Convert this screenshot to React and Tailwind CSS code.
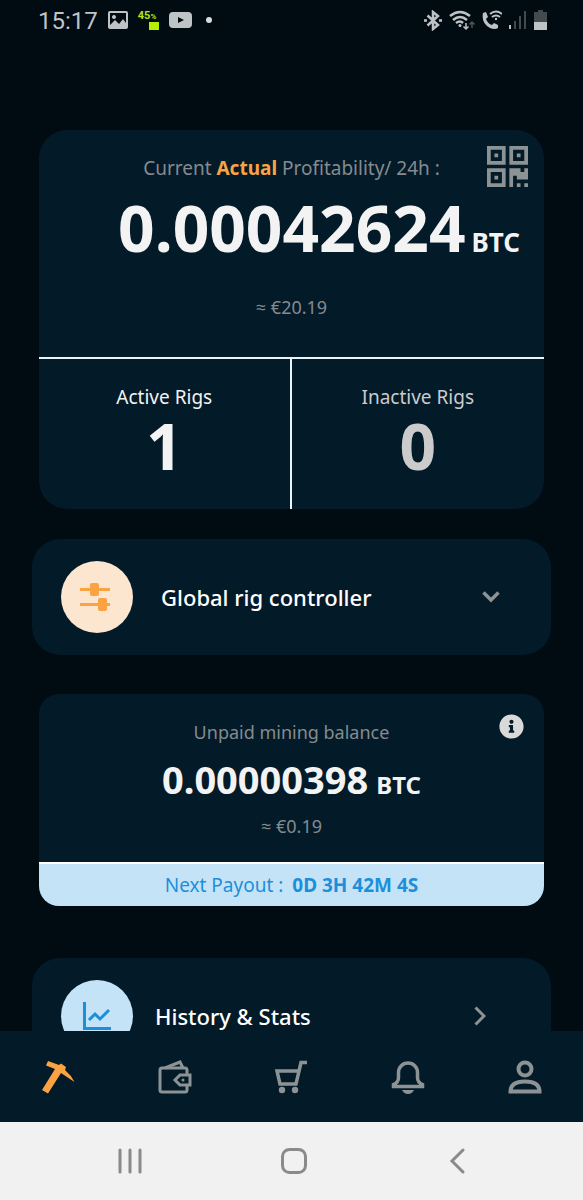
import { useState } from "react";
import { FaInfoCircle } from "react-icons/fa";

function StatusBar() {
  return (
    <header className="flex h-10 shrink-0 items-center justify-between pl-[38px] pr-9 text-[#bfc3c6]">
      <div className="flex items-center gap-2.5">
        <span className="pt-0.5 font-['Roboto',sans-serif] text-2xl leading-7">15:17</span>
        <svg width="20" height="18" viewBox="0 0 20 18">
          <path fill="currentColor" fillRule="evenodd" d="M2 0h16a2 2 0 0 1 2 2v14a2 2 0 0 1-2 2H2a2 2 0 0 1-2-2V2a2 2 0 0 1 2-2zM2 2v12l5-5 4 4 4-5 3 4V2zM6 4a2 2 0 1 0 .01 0z" />
        </svg>
        <div className="flex w-[21px] flex-col font-['Roboto',sans-serif] text-[#b4e61e]">
          <span className="text-[11px] font-bold leading-[10px]">45<span className="text-[8px]">%</span></span>
          <span className="h-2 w-2.5 self-end bg-[#b4f000]" />
        </div>
        <svg width="23" height="16" viewBox="0 0 23 16">
          <path fill="currentColor" fillRule="evenodd" d="M4 0h15q4 0 4 4v8q0 4-4 4H4q-4 0-4-4V4q0-4 4-4zm5 5v6l6-3z" />
        </svg>
        <span className="ml-1 h-1.5 w-1.5 rounded-full bg-[#d9dcde]" />
      </div>
      <div className="flex items-center gap-[7px]">
        <svg width="18" height="21" viewBox="0 0 18 21" fill="none" stroke="currentColor" strokeWidth="2.500">
          <path d="M3.500 5.500L14 15 9 19V2l5 4L3.500 15.500" />
          <path d="M0 10.500h3M15 10.500h3" />
        </svg>
        <svg width="26" height="21" viewBox="0 0 26 21" fill="none" stroke="currentColor" strokeWidth="2.500">
          <path d="M1 6q10-8 20 0M4 10q7-6 14 0M7 13q4-3 7 0" />
          <circle cx="11" cy="15.500" r="1.500" fill="currentColor" stroke="none" />
          <path d="M17 13v6M14.500 16.500L17 19l2.500-2.500" strokeWidth="1.500" />
          <path d="M23 18v-6M20.500 14.500L23 12l2.500 2.500" strokeWidth="1.500" opacity=".4" />
        </svg>
        <svg width="20" height="20" viewBox="0 0 20 20">
          <path fill="currentColor" d="M1 3l3-1 2 5-2 2q2 5 6 6l2-2 4 2v3q-3 2-8 0Q-1 13 1 3z" />
          <path fill="none" stroke="currentColor" strokeWidth="2" d="M8 4q6-5 12 0M10 7q4-3 8 0" />
          <circle cx="14" cy="9" r="1.200" fill="currentColor" />
        </svg>
        <svg width="18" height="20" viewBox="0 0 18 20" fill="currentColor">
          <path d="M0 15h2v4H0z" />
          <path opacity=".35" d="M5 11h2v8H5zM10 6h2v13h-2zM15 1h2v18h-2z" />
        </svg>
        <svg width="13" height="20" viewBox="0 0 13 20" fill="currentColor">
          <path opacity=".35" d="M4 0h5v2h4v10H0V2h4z" />
          <path d="M0 12h13v8H0z" />
        </svg>
      </div>
    </header>
  );
}

function QrIcon() {
  return (
    <svg width="41" height="41" viewBox="0 0 11 11" fill="currentColor">
      <path fillRule="evenodd" d="M0 0h5v5H0zM1 1v3h3V1zM2 2h1v1H2zM6 0h5v5H6zM7 1v3h3V1zM8 2h1v1H8zM0 6h5v5H0zM1 7v3h3V7zM2 8h1v1H2z" />
      <path d="M6 6h3v1h1V6h1v3H8V8H7v3H6zM8 10h1v1H8zM10 10h1v1h-1z" />
    </svg>
  );
}

function ProfitCard() {
  return (
    <section className="relative mx-[39px] overflow-hidden rounded-[28px] bg-[#031a28] text-center">
      <button aria-label="Show QR code" className="absolute right-4 top-4 text-[#8d9294]">
        <QrIcon />
      </button>
      <p className="pt-6 text-[19px] leading-7 text-[#858b8f]">
        Current <b className="text-[#fba342]">Actual</b> Profitability/ 24h :
      </p>
      <div className="flex items-baseline justify-end gap-1.5 pr-6 pt-1 font-bold text-[#f3f3f3]">
        <span className="text-[64px] leading-[84px]">0.00042624</span>
        <span className="text-[26px]">BTC</span>
      </div>
      <p className="pb-9 pt-[23px] text-lg leading-7 text-[#858b8f]">≈ €20.19</p>
      <div className="grid grid-cols-2 border-t-2 border-[#e8f4f5]">
        <div className="border-r-2 border-[#e8f4f5] pb-7 pt-6 text-[#f3f3f3]">
          <p className="text-[19px] leading-7">Active Rigs</p>
          <p className="text-[64px] font-bold leading-[70px]">1</p>
        </div>
        <div className="pb-7 pt-6 text-[#cbcbcc]">
          <p className="text-[19px] leading-7">Inactive Rigs</p>
          <p className="text-[64px] font-bold leading-[70px]">0</p>
        </div>
      </div>
    </section>
  );
}

function BalanceCard() {
  return (
    <section className="relative mx-[39px] mt-[39px] overflow-hidden rounded-[20px] bg-[#031a28] text-center">
      <button aria-label="About the unpaid balance" className="absolute right-5 top-5 text-[#d9d9d9]">
        <FaInfoCircle size={25} />
      </button>
      <p className="pt-6 text-lg leading-7 text-[#858b8f]">Unpaid mining balance</p>
      <div className="flex items-baseline justify-center gap-2 font-bold text-[#f3f3f3]">
        <span className="text-[38px] leading-[66px]">0.00000398</span>
        <span className="text-2xl">BTC</span>
      </div>
      <p className="pb-[22px] text-lg leading-7 text-[#858b8f]">≈ €0.19</p>
      <p className="border-t-2 border-white bg-[#c5e3f7] py-[7px] text-[19px] leading-7 text-[#1c8fdb]">
        Next Payout : <b className="ml-1">0D 3H 42M 4S</b>
      </p>
    </section>
  );
}

function RigController() {
  const [open, setOpen] = useState(false);

  return (
    <button onClick={() => setOpen(!open)} aria-expanded={open} className="mx-8 mt-[30px] flex h-[116px] shrink-0 items-center rounded-[28px] bg-[#031a28] pl-[29px] pr-[51px] text-left">
      <span className="flex size-[72px] items-center justify-center rounded-full bg-[#fde6cf] pr-1">
        <svg width="30" height="28" viewBox="0 0 30 28" fill="#fba342">
          <path d="M0 5h30v3H0zM0 20h30v3H0z" />
          <rect x="10" width="9" height="13" rx="2" />
          <rect x="18" y="15" width="9" height="13" rx="2" />
        </svg>
      </span>
      <span className="ml-7 flex-1 text-[22px] font-medium leading-7 text-white">Global rig controller</span>
      <svg width="18" height="12" viewBox="0 0 18 12" fill="none" stroke="#8d9294" strokeWidth="3.500">
        <path d="M1.500 1.500L9 9l7.500-7.500" />
      </svg>
    </button>
  );
}

function HistoryLink() {
  return (
    <a href="#history" className="mx-8 mt-[52px] flex h-[116px] shrink-0 items-center rounded-[28px] bg-[#031a28] pl-[29px] pr-[65px]">
      <span className="flex size-[72px] items-center justify-center rounded-full bg-[#c5e3f7]">
        <svg width="28" height="28" viewBox="0 0 28 28" fill="none" stroke="#1c8fdb" strokeWidth="3">
          <path d="M1.500 0v26.500H28M6 18l6-6 5 5 9-9" />
        </svg>
      </span>
      <span className="ml-[22px] flex-1 text-[22px] font-medium leading-7 text-white">History &amp; Stats</span>
      <svg width="12" height="20" viewBox="0 0 12 20" fill="none" stroke="#8d9294" strokeWidth="3">
        <path d="M1.500 1.500L10 10l-8.500 8.500" />
      </svg>
    </a>
  );
}

const tabs = [
  {
    name: "Mining",
    icon: (
      <svg width="34" height="34" viewBox="0 0 34 34" fill="#fba342">
        <path d="M7 1l11 4 2-1.500L25 7l-1 3q6 5 9.500 12L20 13 7 33.500 1 30 14 9 5 5.500z" />
      </svg>
    ),
  },
  {
    name: "Wallet",
    icon: (
      <svg width="34" height="34" viewBox="0 0 34 34" fill="none" stroke="currentColor" strokeWidth="3">
        <path d="M29 14v-4q0-2-2-2H4Q2 8 2 10v20q0 2 2 2h23q2 0 2-2v-4" />
        <path d="M7 8L22 2l3 6M32 15v10H22l-5-5 5-5z" />
        <circle cx="25" cy="20" r="1.500" fill="currentColor" stroke="none" />
      </svg>
    ),
  },
  {
    name: "Shop",
    icon: (
      <svg width="34" height="34" viewBox="0 0 34 34" fill="none" stroke="currentColor" strokeWidth="3.500">
        <path d="M33 2.500h-6L22 24H6L3 11h22" />
        <circle cx="8" cy="30" r="3.200" fill="currentColor" stroke="none" />
        <circle cx="21" cy="30" r="3.200" fill="currentColor" stroke="none" />
      </svg>
    ),
  },
  {
    name: "Alerts",
    icon: (
      <svg width="34" height="34" viewBox="0 0 34 34" fill="none" stroke="currentColor" strokeWidth="3.500">
        <path d="M2.500 26.500h29v-2q-5-2-5-7v-5a9.500 9.500 0 0 0-19 0v5q0 5-5 7z" />
        <path d="M11 30h12q-2 4-6 4t-6-4z" fill="currentColor" stroke="none" />
      </svg>
    ),
  },
  {
    name: "Profile",
    icon: (
      <svg width="34" height="34" viewBox="0 0 34 34" fill="none" stroke="currentColor" strokeWidth="4">
        <circle cx="17" cy="9" r="6.500" />
        <path d="M2.500 31.500q0-10 14.500-10t14.500 10z" />
      </svg>
    ),
  },
];

function TabBar() {
  return (
    <nav className="flex h-[91px] shrink-0 items-center justify-around bg-[#031a28] text-[#8d9294]">
      {tabs.map((tab) => (
        <button key={tab.name} aria-label={tab.name} className="flex flex-1 justify-center">
          {tab.icon}
        </button>
      ))}
    </nav>
  );
}

function SystemBar() {
  return (
    <footer className="flex h-[78px] shrink-0 items-center justify-between bg-[#f1f1f1] pl-[114px] pr-[110px] text-[#8a8a8a]">
      <button aria-label="Recent apps" className="flex w-8 justify-center">
        <svg width="24" height="26" viewBox="0 0 24 26" stroke="currentColor" strokeWidth="3" strokeLinecap="round">
          <path d="M2 2v22M12 2v22M22 2v22" />
        </svg>
      </button>
      <button aria-label="Home" className="flex w-8 justify-center">
        <svg width="26" height="26" viewBox="0 0 26 26" fill="none" stroke="currentColor" strokeWidth="3">
          <rect x="1.500" y="1.500" width="23" height="23" rx="7" />
        </svg>
      </button>
      <button aria-label="Back" className="flex w-8 justify-center">
        <svg width="16" height="26" viewBox="0 0 16 26" fill="none" stroke="currentColor" strokeWidth="3" strokeLinecap="round">
          <path d="M14 2L3 13l11 11" />
        </svg>
      </button>
    </footer>
  );
}

export default function App() {
  return (
    <div className="flex h-screen flex-col bg-[#000b12] font-['Noto_Sans','Open_Sans',sans-serif]">
      <StatusBar />
      <main className="flex min-h-0 flex-1 flex-col overflow-hidden pt-[90px]">
        <div className="flex shrink-0 flex-col">
          <ProfitCard />
          <RigController />
          <BalanceCard />
          <HistoryLink />
        </div>
      </main>
      <TabBar />
      <SystemBar />
    </div>
  );
}
